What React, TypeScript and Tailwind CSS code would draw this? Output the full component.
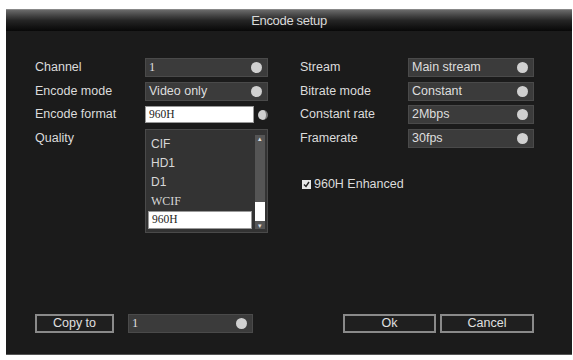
import React from "react";

const sans = { fontFamily: '"Liberation Sans", Arial, sans-serif' };

const Knob = () => (
  <span className="w-[11px] h-[11px] rounded-full bg-[#d0d0d0] shrink-0" />
);

const Field = ({ value, serif }: { value: string; serif?: boolean }) => (
  <div className="h-[19px] bg-[#3b3b3b] border border-[#4a4a4a] flex items-center pl-[3px] pr-[5px]">
    <span
      className={`flex-1 text-[12.5px] text-[#dedede] leading-none ${serif ? "font-['Liberation_Serif']" : ""}`}
    >
      {value}
    </span>
    <Knob />
  </div>
);

const Label = ({ text }: { text: string }) => (
  <div className="h-[19px] flex items-center text-[12.5px] text-[#dcdcdc]">{text}</div>
);

const leftRows = [
  { label: "Channel", value: "1", serif: true },
  { label: "Encode mode", value: "Video only" },
];

const rightRows = [
  { label: "Stream", value: "Main stream" },
  { label: "Bitrate mode", value: "Constant" },
  { label: "Constant rate", value: "2Mbps" },
  { label: "Framerate", value: "30fps" },
];

const qualities = [
  { t: "CIF", serif: false },
  { t: "HD1", serif: false },
  { t: "D1", serif: false },
  { t: "WCIF", serif: true },
];

export default function App() {
  return (
    <div className="w-[573px] h-[360px] bg-white pl-[6px] pt-[9px]" style={sans}>
      <div className="w-[566px] h-[346px] flex flex-col bg-[#1b1b1b] border-b border-[#555]">
        <div className="h-[22px] shrink-0 flex items-center justify-center bg-gradient-to-b from-[#6a6a6a] via-[#252525] to-[#080808] border-t border-[#888]">
          <span className="text-[13px] text-[#dadada] tracking-tight">Encode setup</span>
        </div>
        <div className="flex-1 flex flex-col pt-[27px] pb-[21px] pl-[29px]">
          <div className="flex">
            {/* left column */}
            <div className="flex w-[265px]">
              <div className="w-[110px] flex flex-col gap-[4.5px]">
                <Label text="Channel" />
                <Label text="Encode mode" />
                <Label text="Encode format" />
                <Label text="Quality" />
              </div>
              <div className="w-[123px] flex flex-col gap-[4.5px]">
                {leftRows.map((r) => (
                  <Field key={r.label} value={r.value} serif={r.serif} />
                ))}
                <div className="h-[19px] flex items-center gap-[4px]">
                  <div className="flex-1 h-[17px] bg-white border border-[#999] flex items-center pl-[3px] text-[11.5px] text-[#222] font-['Liberation_Serif']">
                    960H
                  </div>
                  <span className="w-[10px] h-[10px] rounded-full bg-[#cfcfcf] border-r-2 border-[#777] shrink-0" />
                </div>
                <div className="h-[104px] bg-[#333] border border-[#4a4a4a] flex pl-[2px] pr-[2px] pt-[5px] pb-[3px]">
                  <div className="flex-1 flex flex-col pr-[3px]">
                    {qualities.map((q) => (
                      <div
                        key={q.t}
                        className={`h-[19.5px] flex items-center pl-[3px] text-[12px] text-[#d8d8d8] ${q.serif ? "font-['Liberation_Serif']" : ""}`}
                      >
                        {q.t}
                      </div>
                    ))}
                    <div className="h-[18px] mt-[0.5px] bg-white border border-[#999] flex items-center pl-[3px] text-[11.5px] text-[#222] font-['Liberation_Serif']">
                      960H
                    </div>
                  </div>
                  <div className="w-[10px] flex flex-col items-center bg-[#555]">
                    <span className="h-[8px] text-[7px] leading-none text-[#ddd]">▴</span>
                    <div className="flex-1" />
                    <div className="w-[10px] h-[19px] bg-white" />
                    <span className="h-[8px] text-[7px] leading-none text-[#ddd] pt-[1px]">▾</span>
                  </div>
                </div>
              </div>
            </div>
            {/* right column */}
            <div className="flex">
              <div className="w-[108px] flex flex-col gap-[4.5px]">
                {rightRows.map((r) => (
                  <Label key={r.label} text={r.label} />
                ))}
                <div className="mt-[23px] flex items-center gap-[3px] text-[12.5px] text-[#dcdcdc] whitespace-nowrap pl-[2px]">
                  <span className="w-[9px] h-[9px] bg-[#e6e6e6] flex items-center justify-center">
                    <svg width="7" height="7" viewBox="0 0 7 7">
                      <path d="M1 3.5 L3 5.5 L6 1" stroke="#222" strokeWidth="1.4" fill="none" />
                    </svg>
                  </span>
                  960H Enhanced
                </div>
              </div>
              <div className="w-[126px] flex flex-col gap-[4.5px]">
                {rightRows.map((r) => (
                  <Field key={r.label} value={r.value} />
                ))}
              </div>
            </div>
          </div>
          <div className="mt-auto flex items-center h-[19px]">
            <button className="w-[79px] h-[19px] border-2 border-[#8a8a8a] bg-[#1f1f1f] text-[12.5px] text-[#e0e0e0] flex items-center justify-center">
              Copy to
            </button>
            <div className="w-[125px] ml-[14px]">
              <Field value="1" serif />
            </div>
            <button className="ml-[90px] w-[93px] h-[19px] border-2 border-[#8a8a8a] bg-[#1f1f1f] text-[12.5px] text-[#e0e0e0] flex items-center justify-center">
              Ok
            </button>
            <button className="ml-[4px] w-[94px] h-[19px] border-2 border-[#8a8a8a] bg-[#1f1f1f] text-[12.5px] text-[#e0e0e0] flex items-center justify-center">
              Cancel
            </button>
          </div>
        </div>
      </div>
    </div>
  );
}
